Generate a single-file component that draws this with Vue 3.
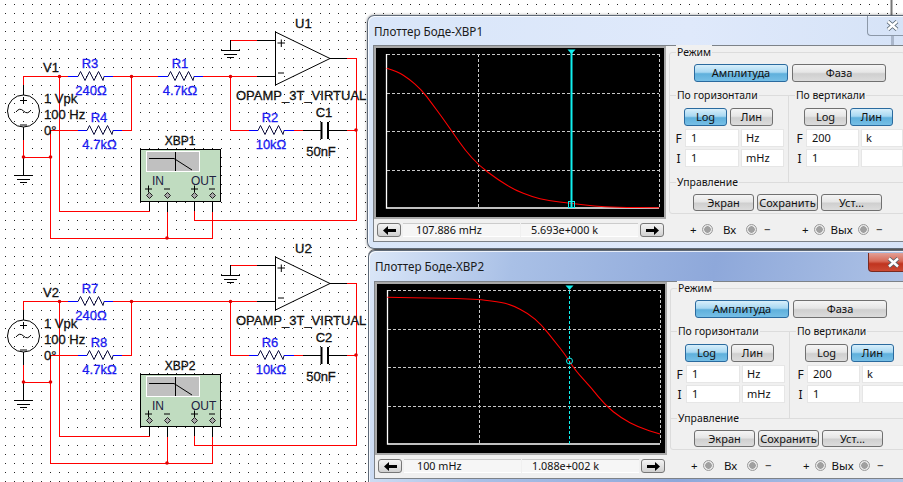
<script setup>
const zig = (x, y) => `M${x} ${y}l2.5 -5l4.5 9l4.5 -9l4.5 9l4.5 -9l4.5 9l1 -4`

const circuits = [
  { dy: 0, v: 'V1', u: 'U1', c: 'C1', xbp: 'XBP1', ra: 'R3', rb: 'R4', rf: 'R2', series: true },
  { dy: 225, v: 'V2', u: 'U2', c: 'C2', xbp: 'XBP2', ra: 'R7', rb: 'R8', rf: 'R6', series: false },
].map((c) => ({
  ...c,
  transform: `translate(0 ${c.dy})`,
  red: [
    'M23.5 85V76.5H68',
    c.series ? 'M113 76.5H158M203 76.5H257' : 'M113 76.5H257',
    'M131.5 76V130.5H122',
    'M78 130.5H50.5V238.5H212.5V212',
    'M23.5 140V157.5H50',
    'M167.5 238V212',
    'M59.5 76V211.5H149.5V211',
    'M194.5 211V220.5H356.5V58.5H347',
    'M230.5 76V130.5H249',
    'M294 130.5H303',
    'M347 130.5H356',
    'M230.5 50V40.5H257',
  ].join(''),
  black: [
    'M23.5 85V95M23.5 127V140M23.5 157V175',
    'M257 40.5H275M257 76.5H275',
    'M330 58.5H347',
    'M303 130.5H321M328 130.5H347',
    'M230.5 40V50',
    'M149.5 197V211M167.5 197V212M194.5 197V211M212.5 197V212',
  ].join(''),
  leads: [
    'M68 76.5H78M104 76.5H113',
    c.series ? 'M158 76.5H168M194 76.5H203' : '',
    'M78 130.5H87M113 130.5H122',
    'M249 130.5H258M284 130.5H294',
  ].join(''),
  zigs: [
    zig(78, 76.5),
    c.series ? zig(168, 76.5) : '',
    zig(87, 130.5),
    zig(258, 130.5),
  ].join(''),
  blue: [
    { t: c.ra, x: 90, y: 68 },
    { t: '240Ω', x: 91, y: 95 },
    ...(c.series ? [{ t: 'R1', x: 180, y: 68 }, { t: '4.7kΩ', x: 180, y: 95 }] : []),
    { t: c.rb, x: 99, y: 122 },
    { t: '4.7kΩ', x: 99.5, y: 149 },
    { t: c.rf, x: 270, y: 122 },
    { t: '10kΩ', x: 271, y: 149 },
  ],
}))

const junctions = [[59.5, 76.5], [131.5, 76.5], [230.5, 76.5], [23.5, 157], [50.5, 157], [356, 130], [167, 238]]
const pins = [149, 167, 194, 212]

// Smooth curve through sampled points: quadratic segments between midpoints.
const toCurve = (list, off) => {
  const pts = list.map(([x, y]) => [x / 3 + 365 + off.x, y / 3 + off.y])
  let d = `M${pts[0][0].toFixed(1)} ${pts[0][1].toFixed(1)}`
  for (let i = 1; i < pts.length - 1; i++) {
    const mx = (pts[i][0] + pts[i + 1][0]) / 2
    const my = (pts[i][1] + pts[i + 1][1]) / 2
    d += `Q${pts[i][0].toFixed(1)} ${pts[i][1].toFixed(1)} ${mx.toFixed(1)} ${my.toFixed(1)}`
  }
  const last = pts[pts.length - 1]
  return `${d}L${last[0].toFixed(1)} ${last[1].toFixed(1)}`
}

const plotters = [
  {
    id: 'a',
    title: 'Плоттер Боде-XBP1',
    left: '107.886 mHz',
    right: '5.693e+000 k',
    cursorX: 571.5,
    dashed: false,
    markerY: 201.5,
    curve: toCurve(
      [[65, 205], [100, 216], [130, 235], [170, 270], [200, 310], [230, 350], [265, 400], [300, 450], [340, 495], [400, 540], [450, 570], [500, 590], [550, 602], [618, 610], [690, 618], [750, 622], [883, 623]],
      { x: 0, y: 0 },
    ),
  },
  {
    id: 'b',
    title: 'Плоттер Боде-XBP2',
    left: '100 mHz',
    right: '1.088e+002 k',
    cursorX: 568.5,
    dashed: true,
    markerY: 125,
    curve: toCurve(
      [[67, 157], [140, 159], [320, 161], [400, 170], [440, 180], [490, 205], [530, 240], [570, 290], [600, 328], [630, 375], [680, 430], [720, 480], [770, 520], [820, 547], [885, 567]],
      { x: -1, y: 9 },
    ),
  },
]

const grid = 'M478 54V208M659 54V208M387 54H659M387 93.5H659M387 131.5H659M387 170.5H659'
</script>

<template>
  <div class="desk">
    <svg class="schematic" width="903" height="482" viewBox="0 0 903 482">
      <defs>
        <pattern id="dots" width="9" height="9" patternUnits="userSpaceOnUse">
          <rect x="5" y="4" width="1" height="1" fill="#222" />
        </pattern>
      </defs>
      <rect width="903" height="482" fill="#fff" />
      <rect width="903" height="482" fill="url(#dots)" />
      <path class="stray" d="M891.5 0V16" />

      <g v-for="c in circuits" :key="c.v" :transform="c.transform">
        <path class="wire-red" :d="c.red" />
        <path class="wire-black" :d="c.black" />
        <path class="lead" :d="c.leads" />
        <path class="zig" :d="c.zigs" />
        <circle v-for="j in junctions" :key="j.join()" :cx="j[0]" :cy="j[1]" r="1.8" class="junction" />

        <!-- source -->
        <circle cx="23.5" cy="111" r="16" class="outline" />
        <path class="glyph" d="M20 100.5H27M23.5 97V104M20 125H27" />
        <path class="glyph" d="M16 112q3.5 -5 7.5 -1t7.5 -1" />

        <!-- grounds -->
        <path class="glyph" d="M14 175.5H33M17 179.5H30M20 182.5H27" />
        <path class="glyph" d="M221 50.5H240M224 54.5H237M227 57.5H234" />

        <!-- op amp -->
        <path class="outline" d="M275.5 32L330 58.5L275.5 85Z" />
        <path class="glyph" d="M277.5 43H285M281.3 39.5V47M278 73H284" />

        <!-- capacitor -->
        <path class="plate" d="M321.5 122V139M328 122V139" />

        <!-- instrument -->
        <rect x="140.5" y="149.5" width="80" height="52" class="box" />
        <rect x="146.5" y="151.5" width="53" height="20" class="screen" />
        <path class="glyph" d="M149 158.5H174L192 170M175.5 152V171" />
        <path class="glyph" d="M145 189H152M148.5 185.5V192.5M164 189H170M191 189H198M194.5 185.5V192.5M209 189H215" />
        <g v-for="p in pins" :key="p">
          <path class="pin" :d="`M${p + 0.5} 192.5l3 3l-3 3l-3 -3Z`" />
        </g>

        <!-- labels -->
        <text x="43" y="72" class="t">{{ c.v }}</text>
        <text x="295" y="28" class="t">{{ c.u }}</text>
        <text x="236" y="100" class="t">OPAMP_3T_VIRTUAL</text>
        <text x="44" y="103" class="t">1 Vpk</text>
        <text x="44" y="119" class="t">100 Hz</text>
        <text x="44" y="135" class="t">0°</text>
        <text x="324" y="117" class="t mid">{{ c.c }}</text>
        <text x="321" y="156" class="t mid">50nF</text>
        <text x="180" y="145" class="t mid tag">{{ c.xbp }}</text>
        <text x="152" y="185" class="t pinlabel">IN</text>
        <text x="191" y="185" class="t pinlabel">OUT</text>
        <text v-for="b in c.blue" :key="b.t + b.x" :x="b.x" :y="b.y" class="t mid blue">{{ b.t }}</text>
      </g>
    </svg>

    <section v-for="p in plotters" :key="p.id" class="win" :class="`win-${p.id}`">
      <header class="titlebar">
        <span class="title">{{ p.title }}</span>
        <span class="close">
          <svg width="13" height="11" viewBox="0 0 13 11">
            <path class="x-out" d="M2 1.5L11 9.5M11 1.5L2 9.5" />
            <path class="x-in" d="M2 1.5L11 9.5M11 1.5L2 9.5" />
          </svg>
        </span>
      </header>

      <div class="client">
        <div class="plot-col">
          <div class="plot-frame">
            <svg class="plot" width="288" height="169" viewBox="376 48 288 169">
              <path class="grid" :d="grid" />
              <path class="axes" d="M386.5 54V208H659" />
              <path class="curve" :d="p.curve" />
              <path class="cursor" :class="{ dashed: p.dashed }" :d="`M${p.cursorX} 50V208`" />
              <path class="cursor-head" :d="`M${p.cursorX - 4} 49.5H${p.cursorX + 4}L${p.cursorX} 54Z`" />
              <circle v-if="p.dashed" class="cursor-mark" :cx="p.cursorX" :cy="p.markerY" r="3" />
              <rect v-else class="cursor-mark" :x="p.cursorX - 3" :y="p.markerY" width="6" height="6" />
            </svg>
          </div>
          <div class="readouts">
            <button class="arrow">
              <svg width="13" height="9" viewBox="0 0 13 9"><path d="M0 4.5L5 0V3H13V6H5V9Z" /></svg>
            </button>
            <div class="readout readout-l">{{ p.left }}</div>
            <div class="readout readout-r">{{ p.right }}</div>
            <button class="arrow">
              <svg width="13" height="9" viewBox="0 0 13 9"><path d="M13 4.5L8 0V3H0V6H8V9Z" /></svg>
            </button>
          </div>
        </div>

        <div class="side">
          <div class="frame">
            <div class="group mode">
              <span class="legend">Режим</span>
              <button class="btn btn-wide on">Амплитуда</button>
              <button class="btn btn-wide">Фаза</button>
            </div>
            <div class="scales">
              <div class="group scale scale-h">
                <span class="legend">По горизонтали</span>
                <div class="pair">
                  <button class="btn btn-small on">Log</button>
                  <button class="btn btn-small">Лин</button>
                </div>
                <div class="fields">
                  <span class="axis-label">F</span>
                  <div class="field">1</div>
                  <div class="field unit">Hz</div>
                  <span class="axis-label">I</span>
                  <div class="field">1</div>
                  <div class="field unit">mHz</div>
                </div>
              </div>
              <div class="group scale scale-v">
                <span class="legend">По вертикали</span>
                <div class="pair">
                  <button class="btn btn-small">Log</button>
                  <button class="btn btn-small on">Лин</button>
                </div>
                <div class="fields">
                  <span class="axis-label">F</span>
                  <div class="field">200</div>
                  <div class="field unit">k</div>
                  <span class="axis-label">I</span>
                  <div class="field">1</div>
                  <div class="field unit"></div>
                </div>
              </div>
            </div>
            <div class="group control">
              <span class="legend">Управление</span>
              <button class="btn btn-ctl">Экран</button>
              <button class="btn btn-ctl">Сохранить</button>
              <button class="btn btn-ctl">Уст...</button>
            </div>
          </div>
          <div class="terminals">
            <div class="term">
              <span>+</span><i class="led"></i><span class="term-name">Вх</span><i class="led"></i><span class="term-minus">−</span>
            </div>
            <div class="term">
              <span>+</span><i class="led"></i><span class="term-name">Вых</span><i class="led"></i><span class="term-minus">−</span>
            </div>
          </div>
        </div>
      </div>
    </section>
  </div>
</template>

<style scoped>
.desk {
  position: relative;
  width: 903px;
  height: 482px;
  overflow: hidden;
  background: #fff;
}
.schematic { display: block; }
.stray { stroke: #777; stroke-width: 2; fill: none; }
.wire-red, .wire-black, .lead, .outline, .glyph { fill: none; stroke-width: 1; }
.wire-red { stroke: #f00; shape-rendering: crispEdges; }
.wire-black { stroke: #000; shape-rendering: crispEdges; }
.lead { stroke: #00f; shape-rendering: crispEdges; }
.zig { fill: none; stroke: #101040; stroke-width: 1; }
.junction { fill: #e00000; }
.outline, .glyph { stroke: #000; }
.plate { fill: none; stroke: #000; stroke-width: 2; }
.box { fill: #c0dcc0; stroke: #000; stroke-width: 1; }
.screen { fill: #c0c0c0; stroke: #fff; stroke-width: 1; }
.pin { fill: #a8a8a8; stroke: #222; stroke-width: 1; }
.t {
  font-family: "Liberation Sans", Arial, sans-serif;
  font-size: 13px;
  fill: #111;
  stroke: #111;
  stroke-width: 0.3px;
}
.mid { text-anchor: middle; }
.blue { fill: #1a1af0; stroke: #1a1af0; }
.tag { font-size: 12px; }
.pinlabel { font-size: 12px; fill: #202040; stroke: none; }

.win {
  position: absolute;
  width: 538px;
  box-sizing: border-box;
  border: 1px solid #5f6a78;
  border-right: 0;
  border-radius: 7px 0 0 7px;
  box-shadow: inset 1px 1px 0 rgba(255, 255, 255, 0.75), 0 0 3px rgba(0, 0, 0, 0.45);
  padding: 0 0 5px 5px;
  font-family: "Noto Sans", "Liberation Sans", sans-serif;
  font-size: 11px;
  color: #111;
}
.win-a {
  left: 367px;
  top: 15px;
  height: 234px;
  background: linear-gradient(90deg, #d9e6f9, #dfe9fb 60%, #d6e3f7);
}
.win-a::after {
  content: "";
  position: absolute;
  left: 523px;
  top: 20px;
  width: 3px;
  height: 9px;
  background: rgba(90, 100, 120, 0.35);
}
.win-b {
  left: 368px;
  top: 250px;
  height: 250px;
  background: linear-gradient(100deg, #dbe7f8 0, #a9c0e6 25%, #8ea8da 60%, #b3c7e8 100%);
  box-shadow: inset 1px 1px 0 rgba(255, 255, 255, 0.75), 0 -1px 0 #555;
}
.titlebar {
  height: 29px;
  display: flex;
  align-items: center;
  justify-content: space-between;
  padding-left: 1px;
}
.win-b .titlebar { height: 30px; }
.title { font-size: 11.7px; color: #1a1a1a; }
.close {
  align-self: flex-start;
  width: 38px;
  height: 20px;
  box-sizing: border-box;
  border: 1px solid #8c98a8;
  border-top: 0;
  border-right: 0;
  border-radius: 0 0 0 4px;
  display: flex;
  align-items: center;
  padding-left: 18px;
}
.win-b .close {
  height: 19px;
  margin-top: 2px;
  border-color: #7a2a20;
  background: linear-gradient(#e2a096, #d86a58 45%, #c0341f 60%, #cc4a34);
}
.x-out { fill: none; stroke: #50606c; stroke-width: 4; }
.x-in { fill: none; stroke: #fff; stroke-width: 2.4; }

.client {
  height: 197px;
  box-sizing: border-box;
  border: 1px solid #7d8288;
  border-right: 0;
  background: #f0f0f0;
  display: flex;
}
.win-b .client { height: 198px; }

.plot-col { width: 292px; flex: none; }
.plot-frame {
  box-sizing: border-box;
  width: 292px;
  height: 173px;
  border: 2px solid #a8a8a8;
  background: #000;
}
.plot { display: block; }
.grid { fill: none; stroke: #c8c8c8; stroke-width: 1; stroke-dasharray: 3 2; shape-rendering: crispEdges; }
.axes { fill: none; stroke: #fff; stroke-width: 1.3; }
.curve { fill: none; stroke: #f00; stroke-width: 1.1; }
.cursor { fill: none; stroke: #10f0f0; stroke-width: 2; }
.cursor.dashed { stroke-width: 1; stroke-dasharray: 3 2; }
.cursor-head { fill: #10f0f0; }
.cursor-mark { fill: none; stroke: #10f0f0; stroke-width: 1; }

.readouts {
  margin: 4px 0 0 3px;
  display: flex;
  align-items: stretch;
  height: 14px;
}
.arrow {
  width: 24px;
  padding: 0;
  display: flex;
  align-items: center;
  justify-content: center;
  border: 1px solid #777;
  border-radius: 3px;
  background: linear-gradient(#f4f4f4, #d0d0d0);
}
.arrow path { fill: #000; }
.readout {
  width: 117px;
  margin-left: 2px;
  box-sizing: border-box;
  background: #f6f6f6;
  border-top: 1px solid #ccc;
  border-bottom: 1px solid #fff;
  line-height: 12px;
  font-size: 10.8px;
  white-space: nowrap;
}
.readout-l { padding-left: 13px; }
.readout-r { padding-left: 10px; margin-left: 1px; margin-right: 2px; }

.side { margin-left: 3px; padding-top: 6px; flex: 1; min-width: 0; }
.frame {
  box-sizing: border-box;
  height: 162px;
  border: 1px solid #dcdcdc;
  border-radius: 3px;
}
.group { position: relative; }
.legend {
  position: absolute;
  top: -8px;
  left: 6px;
  line-height: 15px;
  padding: 0 1px;
  font-size: 10.4px;
  background: #f0f0f0;
  white-space: nowrap;
}
.mode { height: 42px; box-sizing: border-box; padding: 11px 0 0 24px; display: flex; gap: 4px; align-items: flex-start; }
.scales { display: flex; height: 86px; border-top: 1px solid #dcdcdc; border-bottom: 1px solid #dcdcdc; }
.scale { box-sizing: border-box; padding-top: 12px; }
.scale-h { width: 119px; border-right: 1px solid #dcdcdc; padding-left: 2px; }
.scale-v { flex: 1; padding-left: 4px; }
.pair { display: flex; gap: 3px; margin-left: 12px; }
.scale-v .pair { margin-left: 11px; }
.control { box-sizing: border-box; padding: 11px 0 0 23px; display: flex; gap: 3px; align-items: flex-start; }
.btn {
  padding: 0;
  box-sizing: border-box;
  height: 18px;
  font: inherit;
  color: #111;
  line-height: 14px;
  border: 1px solid #707070;
  border-radius: 3px;
  background: linear-gradient(#f5f5f5 0, #e6e6e6 45%, #cfcfcf 55%, #dcdcdc 100%);
}
.btn.on {
  border-color: #2a6a9e;
  background: linear-gradient(#d8effb 0, #a8d8f2 45%, #5fb0dc 55%, #76bfe6 100%);
}
.btn-wide { width: 94px; }
.btn-small { width: 43px; }
.btn-ctl { width: 61px; height: 17px; }
.fields {
  margin-top: 3px;
  display: grid;
  grid-template-columns: 11px 54px 43px;
  grid-auto-rows: 18px;
  gap: 2px;
}
.scale-v .fields { grid-template-columns: 11px 53px 42px; }
.axis-label { margin-right: -2px; text-align: center; line-height: 20px; font-size: 12px; }
.field {
  background: #fff;
  border: 1px solid #e6e6e6;
  box-sizing: border-box;
  padding-left: 5px;
  line-height: 15px;
}
.unit { padding-left: 4px; }
.terminals {
  margin: 7px 0 0 21px;
  display: flex;
  gap: 30px;
  font-size: 11.5px;
}
.term {
  display: grid;
  grid-template-columns: 12px 11px 33px 11px 15px;
  align-items: center;
  height: 16px;
}
.term-name { text-align: center; }
.term-minus { padding-left: 7px; }
.led {
  width: 11px;
  height: 11px;
  border-radius: 50%;
  box-sizing: border-box;
  border: 1px solid #9a9a9a;
  background: radial-gradient(circle, #a0a0a0 0 3px, #e8e8e8 3.5px);
}
</style>

<style>
html, body { margin: 0; overflow: hidden; background: #fff; }
</style>
